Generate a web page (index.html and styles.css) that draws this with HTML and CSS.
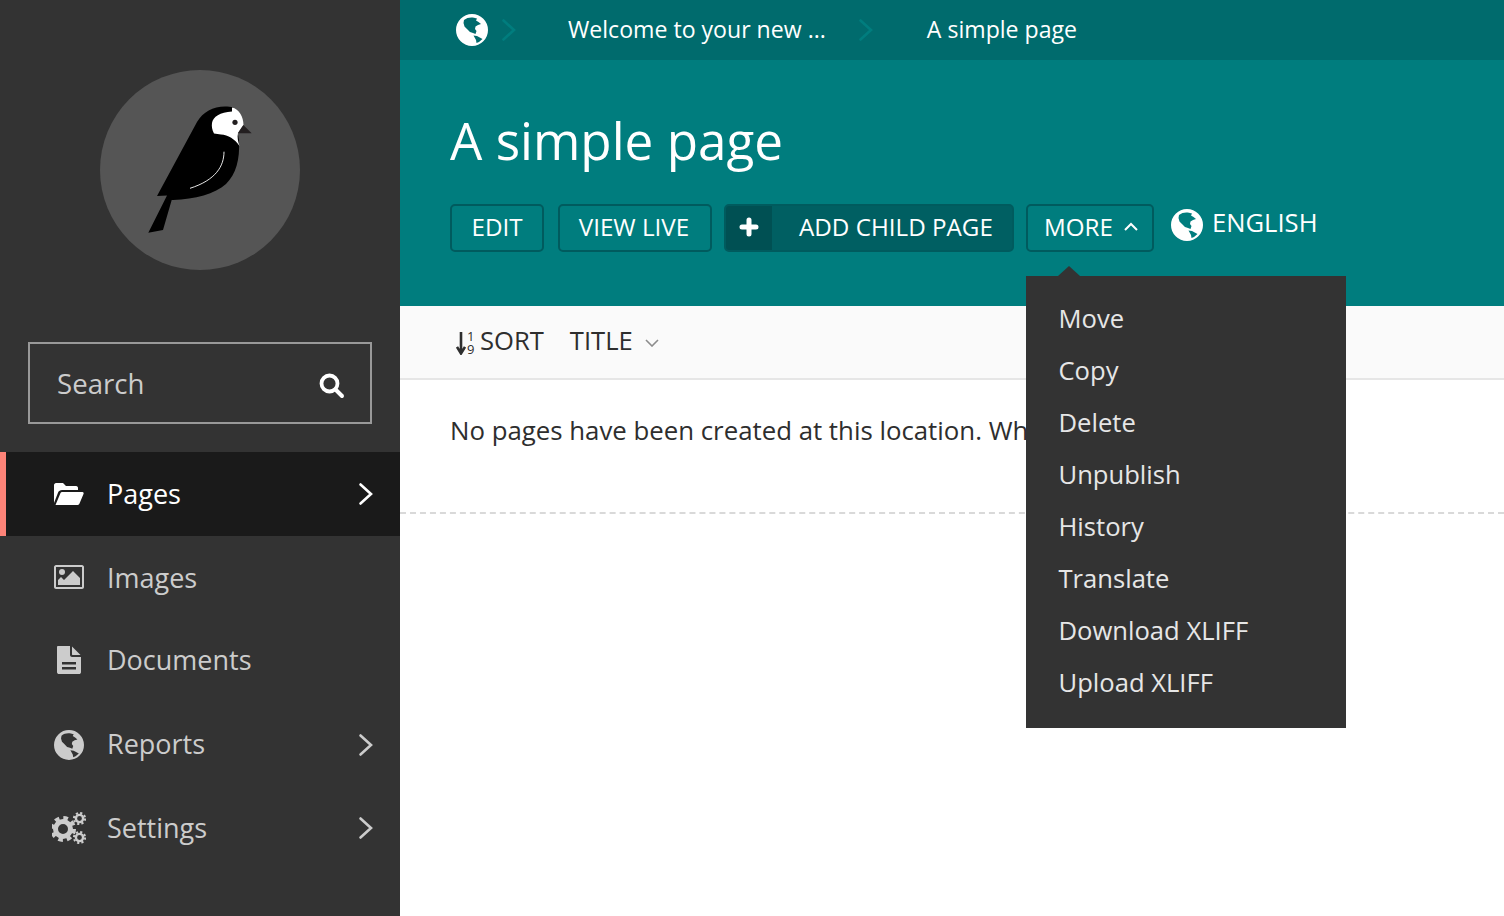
FILE: index.html
```html
<!DOCTYPE html>
<html lang="en">
<head>
    <meta charset="UTF-8">
    <title>A simple page</title>
    <link rel="stylesheet" href="styles.css">
</head>
<body>
    <svg class="defs" width="0" height="0">
        <symbol id="globe" viewBox="0 0 32 32">
            <path fill-rule="evenodd" d="M16 0a16 16 0 1 0 0 32a16 16 0 0 0 0-32z M8 6C11 3.500 15 3 18 3.800L21 4.500L20 6.500L22.500 8L25 10L22 11L19.500 12.500L19 15L20.500 17L19.500 20L17 19L14 18L11 15L8.500 12.500L7.500 9z M17.500 21.500L21 22L26.500 25L23 28L20.500 29L20 26z"/>
        </symbol>
        <symbol id="chevron" viewBox="0 0 16 24">
            <path d="M2.500 2.500L13 12L2.500 21.500" fill="none" stroke="currentColor" stroke-width="2.600" stroke-linecap="round"/>
        </symbol>
    </svg>

    <div class="app">
        <aside class="sidebar">
            <div class="logo">
                <svg viewBox="0 0 200 200" width="200" height="200">
                    <path fill="#000" d="M57 126L97 52C103 42 113 36.500 125 36.500C128 36.500 131 36.800 133 37.500L139 70C140 90 136 104 126 114C115 124 95 129 73 130L71.700 130L63 160L48.300 162.700L67 125.500z"/>
                    <path fill="#fff" d="M132 37.600C139 39 143.500 47 143.500 55L138 63.500C137 67 138 71 139.500 76C135 69 128 65 121 64.500L114 63.500C112 60 111.500 56 112 53C113 47 120 42 132 41.500z"/>
                    <path fill="#231f20" d="M137.700 63.300L151.700 63.300L143.300 55z"/>
                    <circle cx="135" cy="52.300" r="2.600" fill="#231f20"/>
                    <path fill="none" stroke="#fff" stroke-width="0.900" d="M124 81.700C124 96 116 110 90 118.300"/>
                </svg>
            </div>
            <form class="search">
                <span class="search-label">Search</span>
                <svg class="search-icon" viewBox="0 0 26 26" width="26" height="26">
                    <circle cx="10.500" cy="10.500" r="8" fill="none" stroke="#fff" stroke-width="3.800"/>
                    <path d="M16.500 16.500l6.500 6.500" stroke="#fff" stroke-width="4" stroke-linecap="round"/>
                </svg>
            </form>
            <nav class="menu">
                <a class="menu-item active">
                    <svg class="menu-icon" viewBox="0 0 30 22" width="30" height="22"><path d="M0 20V2C0 1 1 0 2 0H9L12 3H22C23.500 3 24 4 24 5V7H8C6 7 5 8 4.300 9zM1.500 22L6.500 10C7 9.300 7.500 9 8.500 9H28.500C29.500 9 30 10 29.500 11L25.500 20.500C25 21.500 24 22 23 22z"/></svg>
                    <span class="menu-label">Pages</span>
                    <svg class="menu-arrow" width="16" height="24"><use href="#chevron"/></svg>
                </a>
                <a class="menu-item">
                    <svg class="menu-icon" viewBox="0 0 30 24" width="30" height="24"><path fill-rule="evenodd" d="M2 0H28C29 0 30 1 30 2V22C30 23 29 24 28 24H2C1 24 0 23 0 22V2C0 1 1 0 2 0zM2 2V22H28V2z"/><circle cx="8" cy="7" r="3"/><path d="M4 20V15L7 12L10 15L19 6L26 13V20z"/></svg>
                    <span class="menu-label">Images</span>
                </a>
                <a class="menu-item">
                    <svg class="menu-icon" viewBox="0 0 30 30" width="30" height="30"><path fill-rule="evenodd" d="M4 0H16V9C16 10 17 11 18 11H27V26C27 27.500 26 28 25 28H5C4 28 3 27.500 3 26V1C3 .500 3.500 0 4 0zM8 16V18.500H22V16zM8 21V23.500H22V21z"/><path d="M18 .500L26.500 9H18.500C18.200 9 18 8.800 18 8.500z"/></svg>
                    <span class="menu-label">Documents</span>
                </a>
                <a class="menu-item">
                    <svg class="menu-icon" width="30" height="30"><use href="#globe"/></svg>
                    <span class="menu-label">Reports</span>
                    <svg class="menu-arrow" width="16" height="24"><use href="#chevron"/></svg>
                </a>
                <a class="menu-item">
                    <svg class="menu-icon" viewBox="0 0 34 32" width="34" height="32">
                        <circle cx="11" cy="17" r="7.500" fill="none" stroke="currentColor" stroke-width="5"/>
                        <circle cx="11" cy="17" r="11" fill="none" stroke="currentColor" stroke-width="4" stroke-dasharray="4.600 4.040"/>
                        <circle cx="27.500" cy="6.500" r="3.600" fill="none" stroke="currentColor" stroke-width="2.400"/>
                        <circle cx="27.500" cy="6.500" r="5.600" fill="none" stroke="currentColor" stroke-width="2" stroke-dasharray="2.200 2.200"/>
                        <circle cx="27.500" cy="25.500" r="3.600" fill="none" stroke="currentColor" stroke-width="2.400"/>
                        <circle cx="27.500" cy="25.500" r="5.600" fill="none" stroke="currentColor" stroke-width="2" stroke-dasharray="2.200 2.200"/>
                    </svg>
                    <span class="menu-label">Settings</span>
                    <svg class="menu-arrow" width="16" height="24"><use href="#chevron"/></svg>
                </a>
            </nav>
        </aside>

        <main class="main">
            <div class="breadcrumb">
                <svg class="crumb-globe" width="32" height="32"><use href="#globe"/></svg>
                <svg class="crumb-sep first" width="16" height="24"><use href="#chevron"/></svg>
                <a class="crumb">Welcome to your new ...</a>
                <svg class="crumb-sep" width="16" height="24"><use href="#chevron"/></svg>
                <a class="crumb">A simple page</a>
            </div>

            <header class="page-header">
                <h1>A simple page</h1>
                <div class="actions">
                    <a class="btn btn-edit">Edit</a>
                    <a class="btn btn-live">View live</a>
                    <a class="btn btn-add">
                        <span class="btn-add-icon">
                            <svg viewBox="0 0 20 20" width="20" height="20"><path d="M10 3v14M3 10h14" stroke="#fff" stroke-width="5" stroke-linecap="round"/></svg>
                        </span>
                        <span class="btn-add-label">Add child page</span>
                    </a>
                    <div class="more-wrap">
                        <a class="btn btn-more">More
                            <svg viewBox="0 0 14 10" width="14" height="10"><path d="M1 8l6-6l6 6" fill="none" stroke="#fff" stroke-width="2"/></svg>
                        </a>
                        <ul class="dropdown">
                            <li>Move</li>
                            <li>Copy</li>
                            <li>Delete</li>
                            <li>Unpublish</li>
                            <li>History</li>
                            <li>Translate</li>
                            <li>Download XLIFF</li>
                            <li>Upload XLIFF</li>
                        </ul>
                    </div>
                    <a class="locale">
                        <svg width="32" height="32"><use href="#globe"/></svg>
                        <span>English</span>
                    </a>
                </div>
            </header>

            <div class="listing-bar">
                <svg class="sort-arrow" viewBox="0 0 10 24" width="10" height="24">
                    <path d="M5 1v20M1 16l4 6.500L9 16" fill="none" stroke="#2e2e2e" stroke-width="2.600"/>
                </svg>
                <span class="sort-nums"><span>1</span><span>9</span></span>
                <span class="sort-label">Sort</span>
                <span class="sort-title">Title</span>
                <svg class="sort-caret" viewBox="0 0 14 8" width="14" height="8"><path d="M1 1l6 6l6-6" fill="none" stroke="#8c8c8c" stroke-width="1.600"/></svg>
            </div>

            <p class="empty">No pages have been created at this location. Why not <a>create one</a>?</p>
        </main>
    </div>
</body>
</html>
```

FILE: styles.css
```css
* {
    box-sizing: border-box;
}
html, body {
    height: 100%;
}
body {
    margin: 0;
    font-family: "Open Sans", sans-serif;
    color: #2e2e2e;
    background-color: #fff;
    overflow: hidden;
}
.defs {
    position: absolute;
}
.app {
    display: flex;
    height: 916px;
}

/* sidebar */
.sidebar {
    width: 400px;
    flex-shrink: 0;
    background-color: #333;
    color: #ccc;
    padding-top: 70px;
}
.logo {
    width: 200px;
    height: 200px;
    margin: 0 auto;
    border-radius: 50%;
    background-color: #555;
}
.logo svg {
    display: block;
}
.search {
    display: flex;
    align-items: center;
    justify-content: space-between;
    height: 82px;
    margin: 72px 28px 28px;
    padding: 0 25px 0 27px;
    border: 2px solid #999;
}
.search-label {
    font-size: 27.6px;
    color: #ccc;
}
.search-icon {
    margin-top: 5px;
}
.menu-item {
    display: flex;
    align-items: center;
    height: 83.6px;
    padding-left: 52px;
    font-size: 27px;
    color: #ccc;
}
.menu-item.active {
    background-color: #1a1a1a;
    border-left: 6px solid #fd8378;
    padding-left: 46px;
    color: #fff;
}
.menu-icon {
    width: 34px;
    margin-right: 21px;
    flex-shrink: 0;
    fill: currentColor;
    color: inherit;
}
.menu-label {
    margin-bottom: 2px;
}
.menu-item:nth-child(-n+2) .menu-label {
    margin-bottom: 0;
}
.menu-arrow {
    margin-left: auto;
    margin-right: 26px;
}

/* main */
.main {
    flex: 1;
    min-width: 0;
}
.breadcrumb {
    display: flex;
    align-items: center;
    height: 60px;
    padding-left: 56px;
    background-color: #006b6d;
    font-size: 23.1px;
    color: #fff;
}
.crumb-globe {
    fill: #fff;
}
.crumb-sep {
    color: #007d7e;
    margin: 0 53px 0 32px;
}
.crumb-sep.first {
    margin: 0 51px 0 13px;
}
.crumb {
    white-space: nowrap;
    margin-bottom: 3px;
}
.page-header {
    height: 246px;
    padding: 44px 50px 0;
    background-color: #007d7e;
    color: #fff;
}
.page-header h1 {
    margin: 0;
    font-size: 51.2px;
    font-weight: 400;
    line-height: 72px;
}
.actions {
    display: flex;
    align-items: flex-start;
    margin-top: 28px;
}
.btn {
    display: flex;
    align-items: center;
    justify-content: center;
    height: 48px;
    padding-bottom: 3px;
    border: 2px solid #005b5e;
    border-radius: 5px;
    font-size: 24.2px;
    color: #fff;
    text-transform: uppercase;
    white-space: nowrap;
}
.btn-edit {
    width: 94px;
    margin-right: 14px;
}
.btn-live {
    width: 154px;
    margin-right: 12px;
    padding-right: 2px;
}
.btn-add {
    width: 290px;
    margin-right: 12px;
    padding-bottom: 0;
    background-color: #005f62;
    justify-content: flex-start;
    overflow: hidden;
}
.btn-add-icon {
    display: flex;
    align-items: center;
    justify-content: center;
    width: 46px;
    height: 100%;
    padding-bottom: 3px;
    background-color: #005053;
}
.btn-add-label {
    margin-left: 27px;
    margin-bottom: 3px;
}
.more-wrap {
    position: relative;
    margin-right: 17px;
}
.btn-more {
    width: 128px;
    justify-content: flex-start;
    padding-left: 16px;
}
.btn-more svg {
    margin-left: 11px;
}
.dropdown {
    position: absolute;
    left: 0;
    top: 72px;
    width: 320px;
    height: 452px;
    margin: 0;
    padding: 17px 0 0 32.5px;
    list-style: none;
    background-color: #333;
    z-index: 5;
}
.dropdown::before {
    content: "";
    position: absolute;
    left: 32px;
    top: -10px;
    border-left: 11px solid transparent;
    border-right: 11px solid transparent;
    border-bottom: 10px solid #333;
}
.dropdown li {
    height: 52px;
    line-height: 52px;
    font-size: 25.6px;
    color: #e6e6e6;
}
.locale {
    display: flex;
    align-items: flex-start;
    fill: #fff;
    font-size: 25.6px;
    line-height: 38px;
    text-transform: uppercase;
}
.locale svg {
    margin: 5px 9px 0 0;
}

/* listing */
.listing-bar {
    display: flex;
    align-items: center;
    height: 74px;
    padding-left: 56px;
    padding-bottom: 3px;
    background-color: #fafafa;
    border-bottom: 2px solid #e6e6e6;
    font-size: 25.6px;
    text-transform: uppercase;
}
.sort-arrow {
    margin-top: 5px;
}
.sort-nums {
    display: flex;
    flex-direction: column;
    width: 8px;
    margin-top: 5px;
    margin-left: 1px;
    margin-right: 5px;
    font-size: 13px;
    line-height: 13px;
}
.sort-title {
    margin-left: 26px;
}
.sort-caret {
    margin-left: 12px;
    margin-top: 4px;
}
.empty {
    height: 134px;
    margin: 0;
    padding-top: 30px;
    padding-left: 50px;
    font-size: 25.8px;
    line-height: 40px;
    white-space: nowrap;
    border-bottom: 2px dashed #d9d9d9;
}
```
